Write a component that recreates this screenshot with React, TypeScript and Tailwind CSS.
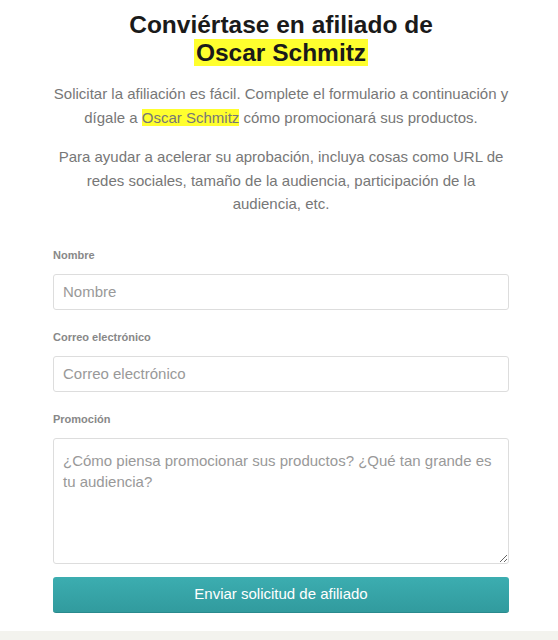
export default function App() {
    const name = "Oscar Schmitz";

    return (
        <div className="min-h-[640px] bg-white font-['Liberation_Sans',Arial,sans-serif] flex flex-col">
            <div className="w-[456px] ml-[53px] pt-[11px]">
                <h1 className="text-center text-[24.5px] leading-[28px] font-bold text-[#1a1a1a]">
                    Conviértase en afiliado de
                    <br />
                    <span className="bg-[#ffff2e] px-[2px]">{name}</span>
                </h1>

                <p className="mt-[15px] text-center text-[15px] leading-[24px] text-[#777]">
                    Solicitar la afiliación es fácil. Complete el formulario a continuación y
                    dígale a <span className="bg-[#ffff2e]">{name}</span> cómo promocionará sus productos.
                </p>

                <p className="mt-[15px] text-center text-[15px] leading-[23.5px] text-[#777]">
                    Para ayudar a acelerar su aprobación, incluya cosas como URL de redes
                    sociales, tamaño de la audiencia, participación de la audiencia, etc.
                </p>

                <form className="mt-[32px] flex flex-col">
                    <label className="text-[11px] leading-[14px] font-bold text-[#888]">Nombre</label>
                    <input
                        className="
                            mt-[12px] h-[36px] px-[9px] border border-[#ddd] rounded-[3px]
                            text-[15px] text-[#555] placeholder:text-[#999] outline-none
                        "
                        placeholder="Nombre"
                    />

                    <label className="mt-[20px] text-[11px] leading-[14px] font-bold text-[#888]">
                        Correo electrónico
                    </label>
                    <input
                        className="
                            mt-[12px] h-[36px] px-[9px] border border-[#ddd] rounded-[3px]
                            text-[15px] text-[#555] placeholder:text-[#999] outline-none
                        "
                        placeholder="Correo electrónico"
                    />

                    <label className="mt-[20px] text-[11px] leading-[14px] font-bold text-[#888]">
                        Promoción
                    </label>
                    <textarea
                        className="
                            mt-[12px] h-[126px] px-[9px] py-[11px] border border-[#ddd] rounded-[3px]
                            text-[15px] leading-[21px] text-[#555] placeholder:text-[#999] outline-none
                        "
                        placeholder="¿Cómo piensa promocionar sus productos? ¿Qué tan grande es tu audiencia?"
                    />

                    <button
                        type="button"
                        className="
                            mt-[13px] h-[36px] rounded-[3px] border-b border-[#2a8a8d]
                            bg-gradient-to-b from-[#3cadb0] to-[#319b9e]
                            text-white text-[15px]
                        "
                    >
                        Enviar solicitud de afiliado
                    </button>
                </form>
            </div>
            <div className="mt-auto h-[9px] bg-[#f3f3ee]" />
        </div>
    );
}
